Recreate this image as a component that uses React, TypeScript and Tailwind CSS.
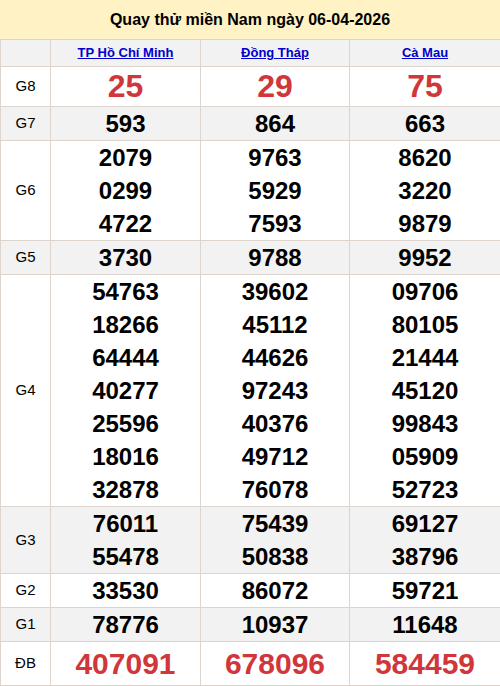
import React from "react";

const provinces = ["TP Hồ Chí Minh", "Đồng Tháp", "Cà Mau"];

type Row = { label: string; values: string[][]; kind?: "g8" | "db"; gray?: boolean };

const rows: Row[] = [
  { label: "G8", values: [["25"], ["29"], ["75"]], kind: "g8" },
  { label: "G7", values: [["593"], ["864"], ["663"]], gray: true },
  {
    label: "G6",
    values: [
      ["2079", "0299", "4722"],
      ["9763", "5929", "7593"],
      ["8620", "3220", "9879"],
    ],
  },
  { label: "G5", values: [["3730"], ["9788"], ["9952"]], gray: true },
  {
    label: "G4",
    values: [
      ["54763", "18266", "64444", "40277", "25596", "18016", "32878"],
      ["39602", "45112", "44626", "97243", "40376", "49712", "76078"],
      ["09706", "80105", "21444", "45120", "99843", "05909", "52723"],
    ],
  },
  {
    label: "G3",
    values: [
      ["76011", "55478"],
      ["75439", "50838"],
      ["69127", "38796"],
    ],
    gray: true,
  },
  { label: "G2", values: [["33530"], ["86072"], ["59721"]] },
  { label: "G1", values: [["78776"], ["10937"], ["11648"]], gray: true },
  { label: "ĐB", values: [["407091"], ["678096"], ["584459"]], kind: "db" },
];

export default function App() {
  return (
    <div className="w-[500px] bg-white font-['Liberation_Sans',Arial,sans-serif] text-black">
      <div className="flex h-[39px] items-center justify-center bg-[#fff2c5] text-[16px] font-bold">
        Quay thử miền Nam ngày 06-04-2026
      </div>
      <table className="w-[500px] table-fixed border-collapse text-center">
        <colgroup>
          <col className="w-[50px]" />
          <col className="w-[150px]" />
          <col className="w-[149px]" />
          <col className="w-[151px]" />
        </colgroup>
        <thead>
          <tr className="h-[27px] bg-[#f2f2f2]">
            <th className="border border-[#ddd5cd]" />
            {provinces.map((p) => (
              <th key={p} className="border border-[#ddd5cd] p-0 text-[13px] font-bold">
                <a className="text-[#0000cc] underline" href="#">
                  {p}
                </a>
              </th>
            ))}
          </tr>
        </thead>
        <tbody>
          {rows.map((r) => (
            <tr
              key={r.label}
              className={r.gray ? "bg-[#f2f2f2]" : "bg-white"}
            >
              <td className="border border-[#ddd5cd] p-0 text-[15px]">{r.label}</td>
              {r.values.map((col, i) => (
                <td key={i} className="border border-[#ddd5cd] p-0">
                  {col.map((v) => (
                    <div
                      key={v}
                      className={
                        r.kind === "g8"
                          ? "text-[32px] leading-[39px] font-bold text-[#d0363a]"
                          : r.kind === "db"
                          ? "text-[30px] leading-[43px] font-bold text-[#d0363a]"
                          : "text-[24px] leading-[33px] font-bold"
                      }
                    >
                      {v}
                    </div>
                  ))}
                </td>
              ))}
            </tr>
          ))}
        </tbody>
      </table>
    </div>
  );
}
